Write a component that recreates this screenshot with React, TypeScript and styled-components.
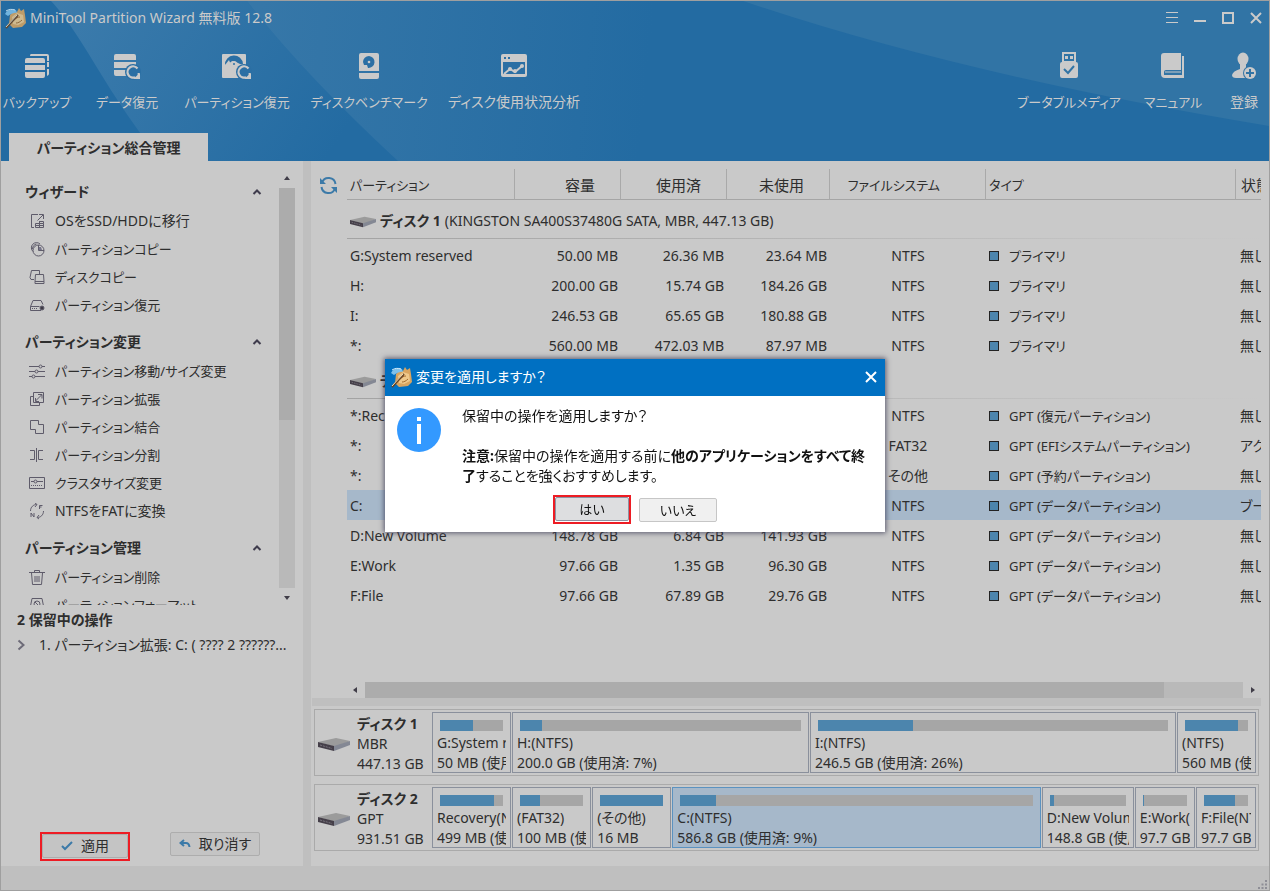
import React from "react";
import styled, { createGlobalStyle, css } from "styled-components";

const GlobalStyle = createGlobalStyle`
  *, *::before, *::after { box-sizing: border-box; }
  body {
    margin: 0;
    background: #c9c9c9;
    color: #2e2e2e;
    font-family: "Noto Sans", "Noto Sans CJK JP", sans-serif;
    font-size: 14px;
    line-height: 20px;
    font-feature-settings: "palt";
  }
  button {
    font: inherit;
    font-feature-settings: inherit;
    color: inherit;
    margin: 0;
    padding: 0;
    border: 0;
    background: none;
  }
  svg { display: block; flex: none; }
`;

/* ---------- Window frame ---------- */

const Window = styled.div`
  display: flex;
  flex-direction: column;
  height: 100vh;
  border: 1px solid #9f9f9f;
  overflow: hidden;
`;

const Header = styled.header`
  position: relative;
  flex: none;
  display: flex;
  flex-direction: column;
  height: 160px;
  background: #236ba2;
  color: #cacaca;
`;

const HeaderArt = styled.svg`
  position: absolute;
  inset: 0;
  width: 100%;
  height: 100%;
`;

const TitleBar = styled.div`
  position: relative;
  display: flex;
  align-items: center;
  gap: 4px;
  height: 33px;
  padding: 0 7px 0 3px;
`;

const AppTitle = styled.h1`
  flex: 1;
  margin: 0;
  font-size: 14px;
  font-weight: 400;
`;

const WindowButtons = styled.div`
  display: flex;
  gap: 16px;
`;

const Toolbar = styled.nav`
  position: relative;
  display: flex;
  justify-content: space-between;
  padding: 16px 9px 0 3px;
`;

const ToolGroup = styled.div<{ $gap: number }>`
  display: flex;
  gap: ${(p) => p.$gap}px;
`;

const ToolButton = styled.button<{ $width: number; $size: number }>`
  display: flex;
  flex-direction: column;
  align-items: center;
  gap: 12px;
  width: ${(p) => p.$width}px;
  font-size: ${(p) => p.$size}px;
  line-height: 20px;
  white-space: nowrap;
`;

const TabRow = styled.div`
  position: relative;
  display: flex;
  margin-top: auto;
  padding-left: 8px;
`;

const Tab = styled.button`
  width: 199px;
  height: 28px;
  padding-top: 2px;
  background: #c9c9c9;
  color: #2e2e2e;
  font-weight: 700;
`;

const Body = styled.div`
  flex: 1;
  display: flex;
  min-height: 0;
`;

const StatusBar = styled.footer`
  flex: none;
  display: flex;
  justify-content: flex-end;
  align-items: flex-end;
  height: 24px;
  padding: 0 2px 1px 0;
  background: #bfbfbf;
`;

/* ---------- Sidebar ---------- */

const Sidebar = styled.aside`
  flex: none;
  display: flex;
  flex-direction: column;
  width: 302px;
`;

const Divider = styled.div`
  flex: none;
  width: 8px;
  background: #bfbfbf;
`;

const ActionPane = styled.div`
  flex: 444 1 444px;
  display: flex;
  min-height: 0;
  padding-right: 8px;
  overflow: hidden;
`;

const ActionList = styled.div`
  flex: 1;
  padding: 8px 17px 0 24px;
`;

const GroupHead = styled.button`
  display: flex;
  align-items: center;
  justify-content: space-between;
  width: 100%;
  height: 28px;
  margin-top: 10px;
  padding-bottom: 2px;
  font-size: 14px;
  font-weight: 700;
`;

const ActionItem = styled.button<{ $size: number }>`
  display: flex;
  align-items: center;
  gap: 9px;
  width: 100%;
  height: 28px;
  padding-left: 4px;
  font-size: ${(p) => p.$size}px;
  white-space: nowrap;
`;

const VScroll = styled.div`
  display: flex;
  flex-direction: column;
  align-items: center;
  width: 16px;
  padding: 13px 0 3px;
`;

const VTrack = styled.div`
  flex: 1;
  width: 16px;
  margin: 6px 0 6px;
  background: #b9b9b9;
`;

const VThumb = styled.div`
  height: 58%;
  background: #acacac;
`;

const Pending = styled.section`
  flex: 261 1 261px;
  display: flex;
  flex-direction: column;
  min-height: 0;
  padding: 5px 16px 5px 16px;
`;

const PendingTitle = styled.h2`
  margin: 0 0 5px;
  font-size: 14px;
  font-weight: 700;
  line-height: 20px;
`;

const PendingRow = styled.button`
  display: flex;
  align-items: center;
  gap: 13px;
  white-space: nowrap;
`;

const PendingButtons = styled.div`
  display: flex;
  align-items: flex-start;
  gap: 40px;
  margin-top: auto;
  padding-left: 23px;
`;

const Marked = styled.span`
  display: inline-flex;
  padding-bottom: 1px;
  border: 2px solid #ed1c24;
`;

const PushButton = styled.button<{ $width: number; $tone?: "light" | "focus" }>`
  display: flex;
  align-items: center;
  justify-content: center;
  gap: 8px;
  width: ${(p) => p.$width}px;
  height: 24px;
  border: 1px solid #adadad;
  border-radius: 2px;
  background: #c4c4c4;
  ${(p) => p.$tone === "light" && css`background: #f0f0f0; border-color: #c6c6c6; color: #111; font-size: 13px;`}
  ${(p) => p.$tone === "focus" && css`background: #dddee0; border-color: #8d93a3; color: #111; font-size: 13px;`}
`;

/* ---------- Partition table ---------- */

const Main = styled.main`
  flex: 1;
  display: flex;
  flex-direction: column;
  min-width: 0;
`;

const TablePane = styled.section`
  flex: 1;
  display: flex;
  min-height: 0;
  padding: 8px 8px 0 8px;
  gap: 9px;
`;

const RefreshButton = styled.button`
  align-self: flex-start;
  padding-top: 7px;
`;

const TableColumn = styled.div`
  flex: 1;
  display: flex;
  flex-direction: column;
  min-width: 0;
`;

const TableClip = styled.div`
  flex: 1;
  overflow: hidden;
`;

const Table = styled.table`
  width: 100%;
  table-layout: fixed;
  border-collapse: separate;
  border-spacing: 0;
  white-space: nowrap;
`;

type Align = "left" | "right" | "center";

const HeadCell = styled.th<{ $align?: Align; $pad?: number; $size?: number }>`
  height: 31px;
  padding: 2px ${(p) => p.$pad ?? 4}px 0 3px;
  border-right: 1px solid #a9a9a9;
  border-bottom: 1px solid #a5a5a5;
  text-align: ${(p) => p.$align ?? "left"};
  font-size: ${(p) => p.$size ?? 13}px;
  font-weight: 400;
  overflow: hidden;
  &:last-child { padding: 2px 0 0 5px; border-right: 0; }
`;

const DiskCell = styled.td`
  height: 40px;
  padding: 2px 0 0 3px;
  background: linear-gradient(90deg, #a3a3a3, #c9c9c9) 0 38px / 100% 1px no-repeat;
`;

const DiskLabel = styled.div`
  display: flex;
  align-items: center;
  gap: 4px;
`;

const Row = styled.tr<{ $selected?: boolean }>`
  background: ${(p) => (p.$selected ? "#a6b8ca" : "transparent")};
`;

const Cell = styled.td<{ $align?: Align }>`
  height: 30px;
  padding: 1px 3px 0;
  text-align: ${(p) => p.$align ?? "left"};
  overflow: hidden;
  &:last-child { padding: 1px 0 0 4px; }
`;

const TypeLabel = styled.span<{ $size: number }>`
  display: flex;
  align-items: center;
  gap: 10px;
  font-size: ${(p) => p.$size}px;
`;

const Swatch = styled.i`
  width: 10px;
  height: 10px;
  border: 1px solid #222;
  background: #4c85ad;
`;

const HScroll = styled.div`
  display: flex;
  align-items: center;
  gap: 6px;
  height: 16px;
  padding: 0 4px;
`;

const HTrack = styled.div`
  flex: 1;
  height: 16px;
  background: #b9b9b9;
`;

const HThumb = styled.div`
  width: 91%;
  height: 16px;
  background: #acacac;
`;

const Splitter = styled.div`
  flex: none;
  height: 8px;
  margin: 0 8px 0 1px;
  background: #bfbfbf;
`;

/* ---------- Disk map ---------- */

const DiskMap = styled.section`
  flex: none;
  display: flex;
  flex-direction: column;
  gap: 8px;
  padding: 3px 10px 15px 3px;
`;

const DiskRow = styled.div`
  display: flex;
  height: 67px;
  padding: 2px;
  border: 1px solid #aaaaaa;
`;

const DiskInfo = styled.div`
  flex: none;
  display: flex;
  align-items: center;
  gap: 7px;
  width: 115px;
  padding: 2px 0 0 1px;
`;

const DiskText = styled.div`
  display: flex;
  flex-direction: column;
`;

const Parts = styled.div`
  flex: 1;
  display: flex;
  gap: 1px;
  min-width: 0;
`;

const Part = styled.button<{ $share: number; $selected?: boolean }>`
  flex: ${(p) => `${p.$share} 1 ${p.$share}px`};
  display: flex;
  flex-direction: column;
  min-width: 0;
  padding: 7px 4px 0;
  border: 1px solid ${(p) => (p.$selected ? "#5b92c0" : "#8a909c")};
  background: ${(p) => (p.$selected ? "#a6b8ca" : "transparent")};
  text-align: left;
`;

const UsageBar = styled.span`
  display: block;
  align-self: stretch;
  height: 11px;
  margin: 0 3px 2px;
  background: #a6a6a6;
`;

const UsageFill = styled.span`
  display: block;
  height: 11px;
  background: #4c85ad;
`;

const PartLine = styled.span`
  overflow: hidden;
  white-space: nowrap;
`;

/* ---------- Dialog ---------- */

const Overlay = styled.div`
  position: fixed;
  inset: 0;
  display: flex;
  align-items: center;
  justify-content: center;
`;

const Dialog = styled.div`
  width: 500px;
  background: #fff;
  color: #111;
  box-shadow: 0 0 5px 1px rgba(60, 60, 85, 0.8);
`;

const DialogTitle = styled.div`
  display: flex;
  align-items: center;
  gap: 4px;
  height: 37px;
  padding: 0 8px 2px 5px;
  background: #0070c2;
  color: #fff;
`;

const DialogHeading = styled.h2`
  flex: 1;
  margin: 0;
  font-size: 14px;
  font-weight: 400;
`;

const DialogBody = styled.div`
  display: flex;
  gap: 21px;
  padding: 12px 0 0 12px;
`;

const Message = styled.p`
  margin: -2px 0 0;
  white-space: nowrap;
`;

const DialogButtons = styled.div`
  display: flex;
  align-items: center;
  justify-content: center;
  gap: 8px;
  padding: 9px 0 8px;
`;

/* ---------- Icons ---------- */

const Logo = ({ dim = false }: { dim?: boolean }) => (
  <svg width="22" height="22" viewBox="0 0 22 22" opacity={dim ? 0.85 : 1}>
    <path d="M6 8 10 4 13 5 15 1 17 4 20 2 21 8 22 16 18 20 9 21 5 17z" fill="#d9a560" />
    <path d="M8 10 13 6 19 8 20 15 14 18 9 17z" fill="#eec88b" />
    <path d="M10 13c2-2 4-3 6-3M12 16c2 0 4-1 6-3" stroke="#a26a2c" fill="none" />
    <path d="M1 7C3 3 7 1 12 3l1 3C9 5 6 8 4 9z" fill="#7fc1ea" />
    <path d="M2 4c3-2 6-2 9-1" stroke="#d5ecfa" fill="none" />
    <path d="M2 21 14 8" stroke="#6b4524" strokeWidth="2" />
    <path d="M2 20 13 8" stroke="#f0dfbd" />
  </svg>
);

const IconBackup = () => (
  <svg width="26" height="30" viewBox="0 0 26 30" fill="#cacaca">
    <path d="M7 4h16q2 0 2 2v5h-2V6H6q0-2 1-2zM23 12h2v5h-2zM23 19h2v5q0 1-2 2z" />
    <path d="M3 8h16q2 0 2 2v3H1v-3q0-2 2-2zM1 15h20v5H1zM1 22h20v4q0 2-2 2H3q-2 0-2-2z" />
  </svg>
);

const Restore = ({ x, y }: { x: number; y: number }) => (
  <g transform={`translate(${x} ${y})`}>
    <circle cx="0" cy="0" r="8" fill="#2b6fa4" />
    <path d="M4.5-3.5A5.6 5.6 0 1 0 2 5.3" fill="none" stroke="#cacaca" strokeWidth="2.2" />
    <path d="M0 7h7V1z" fill="#cacaca" />
    <path d="M5.6 1v5" stroke="#cacaca" strokeWidth="2" />
  </g>
);

const IconData = () => (
  <svg width="28" height="30" viewBox="0 0 28 30">
    <path d="M3 4h18q2 0 2 2v4H1V6q0-2 2-2zM1 12h22v6H1zM1 20h14v6H3q-2 0-2-2z" fill="#cacaca" />
    <Restore x={20} y={22} />
  </svg>
);

const IconPartition = () => (
  <svg width="30" height="30" viewBox="2 0 30 30">
    <rect x="2" y="4" width="24" height="24" rx="1" fill="#cacaca" />
    <path d="M5 15a9 9 0 0 1 18-1l-3 0-2-1-2-1-4-1-1 1z" fill="#2b6fa4" />
    <circle cx="14" cy="14" r="3" fill="#cacaca" />
    <circle cx="14" cy="14" r="1" fill="#2b6fa4" />
    <path d="m9 10-4 5h6z" fill="#cacaca" />
    <Restore x={24} y={22} />
  </svg>
);

const IconBenchmark = () => (
  <svg width="24" height="30" viewBox="0 0 24 30">
    <path d="M4 3h16q2 0 2 2v16H2V5q0-2 2-2zM2 23h20v4q0 2-2 2H4q-2 0-2-2z" fill="#cacaca" />
    <path d="M12 6a6 6 0 1 1-1 12l-1-3-3 0-1-3a6 6 0 0 1 6-6z" fill="#2b6fa4" />
    <circle cx="12" cy="12" r="1.3" fill="#cacaca" />
  </svg>
);

const IconAnalysis = () => (
  <svg width="30" height="30" viewBox="0 0 30 30">
    <path d="M4 4h22q2 0 2 2v19q0 2-2 2H4q-2 0-2-2V6q0-2 2-2z" fill="#cacaca" />
    <path d="M5 7h2v2H5zM9 7h2v2H9zM4 12h22v12H4z" fill="#2b6fa4" />
    <path d="m5 24 6-5 5 3 7-6" fill="none" stroke="#cacaca" strokeWidth="2" />
    <circle cx="11" cy="19" r="2" fill="#cacaca" />
    <circle cx="16" cy="21" r="2" fill="#cacaca" />
    <circle cx="23" cy="16" r="2" fill="#cacaca" />
  </svg>
);

const IconUsb = () => (
  <svg width="20" height="30" viewBox="0 0 20 30">
    <path d="M3 2h14v10q2 0 2 2v12q0 2-2 2H3q-2 0-2-2V14q0-2 2-2z" fill="#cacaca" />
    <path d="M5 4h10v7H5z" fill="#3174a5" />
    <path d="M6 6h3v3H6zM11 6h3v3h-3z" fill="#cacaca" />
    <path d="m5 19 4 4 6-7" fill="none" stroke="#3174a5" strokeWidth="2" />
  </svg>
);

const IconBook = () => (
  <svg width="26" height="30" viewBox="0 0 26 30">
    <path d="M4 3h17v17H6q-2 0-2 2v3h18V6h2v22H5q-4 0-4-4V6q0-3 3-3z" fill="#cacaca" />
    <path d="M5 22h16" stroke="#cacaca" />
  </svg>
);

const IconUser = () => (
  <svg width="26" height="30" viewBox="0 0 26 30">
    <ellipse cx="12" cy="9" rx="5.5" ry="6.5" fill="#cacaca" />
    <path d="M9 13h6v6l3 9H5q-4 0-4-3 1-4 8-6z" fill="#cacaca" />
    <circle cx="19" cy="23" r="7" fill="#3174a5" />
    <circle cx="19" cy="23" r="6" fill="#cacaca" />
    <path d="M19 19v8M15 23h8" stroke="#3174a5" strokeWidth="2" />
  </svg>
);

const IconMenu = () => (
  <svg width="12" height="12" viewBox="0 0 12 12"><path d="M0 .5h12M0 5.5h12M0 10.5h12" stroke="#cacaca" /></svg>
);
const IconMin = () => (
  <svg width="12" height="12" viewBox="0 0 12 12"><path d="M0 9h12" stroke="#cacaca" strokeWidth="2" /></svg>
);
const IconMax = () => (
  <svg width="12" height="12" viewBox="0 0 12 12"><path d="M1 1h10v10H1z" fill="none" stroke="#cacaca" strokeWidth="2" /></svg>
);
const IconClose = ({ color = "#cacaca" }: { color?: string }) => (
  <svg width="12" height="12" viewBox="0 0 12 12"><path d="m1 1 10 10M11 1 1 11" stroke={color} strokeWidth="2" /></svg>
);

const Chevron = () => (
  <svg width="10" height="8" viewBox="0 0 10 8"><path d="m1.500 6 3.500-3.500L8.500 6" fill="none" stroke="#3f3c4d" strokeWidth="2" /></svg>
);

const Triangle = ({ turn }: { turn: number }) => (
  <svg width="8" height="8" viewBox="0 0 8 8"><path d="M1 6 4 2l3 4z" fill="#403d48" transform={`rotate(${turn} 4 4)`} /></svg>
);

const sideIcons: Record<string, React.ReactNode> = {
  migrate: <><path d="M9 1.500H2.500v13H5" /><path d="M8.500 7.500 14 2M10 1.500h4.500V6" /><path d="M6.500 10.500h8v4h-8zM10.500 8.500v6M6.500 12.500h8M10 8.500h4.500v2" /></>,
  copyPart: <><path d="M4 10.500A5 5 0 1 1 11 3M3.500 8c0-3 2-4.500 4-5" /><circle cx="9.500" cy="9.500" r="5.500" /><path d="M9.500 4v5.500H15" /><path d="M10 6h2l1 3h-3z" fill="#77758a" stroke="none" /></>,
  copyDisk: <><path d="M5 10.500H2l-1-2 1.500-7h8V5" /><path d="M6.500 5.500h8l.5 7H6zM6 12.500v2h9v-2" /></>,
  recover: <><path d="M1.500 9.500 4 3.500h8l2 4M1.500 9.500h9M1.500 9.500v4H12" /><path d="M3 11.500h6" strokeDasharray="1 1" /><circle cx="13" cy="11" r="2" fill="#3d3a45" /></>,
  resize: <><path d="M0 3.500h16M0 8.500h16M0 13.500h16" /><circle cx="11.500" cy="3.500" r="1.500" fill="#c9c9c9" /><circle cx="7.500" cy="8.500" r="1.500" fill="#c9c9c9" /><circle cx="4.500" cy="13.500" r="1.500" fill="#c9c9c9" /></>,
  extend: <><path d="M4.500 1.500h10v10h-10zM4 5.500H1.500v9h9V12" /><path d="m6.500 10 6-6M9 3.500h4v4M6.500 7v3.500H10" /></>,
  merge: <path d="M1.500 1.500h8v4h5v9h-8v-4h-5z" />,
  split: <path d="M7.500 1v14M1 3.500h4.500v9H1M14 3.500H9.500v9H14" />,
  cluster: <><path d="M.5 2.500h15v11H.5zM2 6.500h12" /><path d="M2 10.500h12" strokeDasharray="1 1" /><circle cx="6.500" cy="6.500" r="1.500" fill="#c9c9c9" /></>,
  convert: <><path d="M1.500 8c0-4 3-6.500 6-6.500M6 0l2 1.500L6 4M14.500 8c0 4-3 6.500-6 6.500M10 12l-2 2.500 2 1.500" /><path d="M10.500 6V2.500h3M10.500 4h2M2 14v-4l3 4v-4" /></>,
  trash: <><path d="M0 3.500h16M5.500 3V1.500h5V3M2.500 4l1 11.500h9l1-11.500M6 7v6M8 7v6M10 7v6" /></>,
  format: <><path d="M3 1.500h10l2 10v4H1v-4z" /><circle cx="8" cy="7" r="3" /><path d="m6 5 4 4" /></>,
};

const SideIcon = ({ name }: { name: string }) => (
  <svg width="17" height="17" viewBox="0 0 17 17" fill="none" stroke="#5e5b6a">{sideIcons[name]}</svg>
);

const DiskIcon = ({ width }: { width: number }) => (
  <svg width={width} height={width / 2} viewBox="0 0 32 16">
    <path d="M0 6 18 2l14 3-14 6z" fill="#9b9b9b" />
    <path d="m0 6 16 4v5L0 11z" fill="#453f49" />
    <path d="m16 10 16-5v4l-16 6z" fill="#848894" />
    <path d="m2 9 12 3.500" stroke="#77737c" strokeDasharray="2 1" />
  </svg>
);

const IconRefresh = () => (
  <svg width="19" height="19" viewBox="0 0 19 19" fill="none" stroke="#3c7aa8" strokeWidth="2">
    <path d="M3 6.500A7 7 0 0 1 16.500 8M16 12.500A7 7 0 0 1 2.500 11" />
    <path d="M1 2v6h6zM18 17v-6h-6z" fill="#3c7aa8" stroke="none" />
  </svg>
);

/* ---------- Data ---------- */

const leftTools = [
  { label: "バックアップ", width: 66, size: 13, icon: <IconBackup /> },
  { label: "データ復元", width: 64, size: 13, icon: <IconData /> },
  { label: "パーティション復元", width: 106, size: 13, icon: <IconPartition /> },
  { label: "ディスクベンチマーク", width: 108, size: 13, icon: <IconBenchmark /> },
  { label: "ディスク使用状況分析", width: 132, size: 14, icon: <IconAnalysis /> },
];

const rightTools = [
  { label: "ブータブルメディア", width: 98, size: 13, icon: <IconUsb /> },
  { label: "マニュアル", width: 56, size: 13, icon: <IconBook /> },
  { label: "登録", width: 32, size: 14, icon: <IconUser /> },
];

const actionGroups = [
  {
    title: "ウィザード",
    items: [
      ["migrate", "OSをSSD/HDDに移行", 14],
      ["copyPart", "パーティションコピー", 13],
      ["copyDisk", "ディスクコピー", 13],
      ["recover", "パーティション復元", 13],
    ],
  },
  {
    title: "パーティション変更",
    items: [
      ["resize", "パーティション移動/サイズ変更", 13],
      ["extend", "パーティション拡張", 13],
      ["merge", "パーティション結合", 13],
      ["split", "パーティション分割", 13],
      ["cluster", "クラスタサイズ変更", 13],
      ["convert", "NTFSをFATに変換", 14],
    ],
  },
  {
    title: "パーティション管理",
    items: [
      ["trash", "パーティション削除", 13],
      ["format", "パーティションフォーマット", 13],
    ],
  },
] as { title: string; items: [string, string, number][] }[];

type Partition = [string, string, string, string, string, string, string];

const disks: { name: string; detail: string; rows: Partition[] }[] = [
  {
    name: "ディスク 1",
    detail: "(KINGSTON SA400S37480G SATA, MBR, 447.13 GB)",
    rows: [
      ["G:System reserved", "50.00 MB", "26.36 MB", "23.64 MB", "NTFS", "プライマリ", "無し"],
      ["H:", "200.00 GB", "15.74 GB", "184.26 GB", "NTFS", "プライマリ", "無し"],
      ["I:", "246.53 GB", "65.65 GB", "180.88 GB", "NTFS", "プライマリ", "無し"],
      ["*:", "560.00 MB", "472.03 MB", "87.97 MB", "NTFS", "プライマリ", "無し"],
    ],
  },
  {
    name: "ディスク 2",
    detail: "",
    rows: [
      ["*:Recovery", "", "", "", "NTFS", "GPT (復元パーティション)", "無し"],
      ["*:", "", "", "", "FAT32", "GPT (EFIシステムパーティション)", "アクティブ"],
      ["*:", "", "", "", "その他", "GPT (予約パーティション)", "無し"],
      ["C:", "", "", "", "NTFS", "GPT (データパーティション)", "ブート"],
      ["D:New Volume", "148.78 GB", "6.84 GB", "141.93 GB", "NTFS", "GPT (データパーティション)", "無し"],
      ["E:Work", "97.66 GB", "1.35 GB", "96.30 GB", "NTFS", "GPT (データパーティション)", "無し"],
      ["F:File", "97.66 GB", "67.89 GB", "29.76 GB", "NTFS", "GPT (データパーティション)", "無し"],
    ],
  },
];

const diskMap = [
  {
    name: "ディスク 1", scheme: "MBR", size: "447.13 GB",
    parts: [
      { share: 79, used: 52, name: "G:System reserved", info: "50 MB (使用済: 52%)" },
      { share: 297, used: 8, name: "H:(NTFS)", info: "200.0 GB (使用済: 7%)" },
      { share: 366, used: 27, name: "I:(NTFS)", info: "246.5 GB (使用済: 26%)" },
      { share: 79, used: 84, name: "(NTFS)", info: "560 MB (使用済: 84%)" },
    ],
  },
  {
    name: "ディスク 2", scheme: "GPT", size: "931.51 GB",
    parts: [
      { share: 79, used: 86, name: "Recovery(NTFS)", info: "499 MB (使用済: 84%)" },
      { share: 79, used: 32, name: "(FAT32)", info: "100 MB (使用済: 30%)" },
      { share: 79, used: 100, name: "(その他)", info: "16 MB" },
      { share: 368, used: 10, name: "C:(NTFS)", info: "586.8 GB (使用済: 9%)" },
      { share: 92, used: 5, name: "D:New Volume(NTFS)", info: "148.8 GB (使用済: 4%)" },
      { share: 60, used: 2, name: "E:Work(NTFS)", info: "97.7 GB" },
      { share: 60, used: 70, name: "F:File(NTFS)", info: "97.7 GB" },
    ],
  },
];

export default function App() {
  return (
    <>
      <GlobalStyle />
      <Window>
        <Header>
          <HeaderArt viewBox="0 0 1268 160" preserveAspectRatio="none" aria-hidden="true">
            <defs>
              <linearGradient id="beamA" x1="0" y1="0" x2="1" y2="0.3">
                <stop offset="0" stopColor="#3d7cac" />
                <stop offset="1" stopColor="#236ba2" />
              </linearGradient>
              <linearGradient id="beamB" gradientUnits="userSpaceOnUse" x1="260" y1="0" x2="650" y2="40">
                <stop offset="0" stopColor="#3677a8" />
                <stop offset="1" stopColor="#236ba2" />
              </linearGradient>
            </defs>
            <path d="M50 0H246Q300 70 397 160H160Q125 115 95 65T50 0z" fill="url(#beamA)" />
            <path d="M246 0H700V160H397Q300 70 246 0z" fill="url(#beamB)" />
            <path d="M742 0Q960 74 1268 125V0z" fill="#3174a5" />
          </HeaderArt>
          <TitleBar>
            <Logo dim />
            <AppTitle>MiniTool Partition Wizard 無料版 12.8</AppTitle>
            <WindowButtons>
              <button aria-label="メニュー"><IconMenu /></button>
              <button aria-label="最小化"><IconMin /></button>
              <button aria-label="最大化"><IconMax /></button>
              <button aria-label="閉じる"><IconClose /></button>
            </WindowButtons>
          </TitleBar>
          <Toolbar>
            <ToolGroup $gap={25}>
              {leftTools.map((t) => (
                <ToolButton key={t.label} $width={t.width} $size={t.size}>{t.icon}{t.label}</ToolButton>
              ))}
            </ToolGroup>
            <ToolGroup $gap={27}>
              {rightTools.map((t) => (
                <ToolButton key={t.label} $width={t.width} $size={t.size}>{t.icon}{t.label}</ToolButton>
              ))}
            </ToolGroup>
          </Toolbar>
          <TabRow>
            <Tab>パーティション総合管理</Tab>
          </TabRow>
        </Header>

        <Body>
          <Sidebar>
            <ActionPane>
              <ActionList>
                {actionGroups.map((g) => (
                  <div key={g.title}>
                    <GroupHead>{g.title}<Chevron /></GroupHead>
                    {g.items.map(([icon, label, size]) => (
                      <ActionItem key={label} $size={size}><SideIcon name={icon} />{label}</ActionItem>
                    ))}
                  </div>
                ))}
              </ActionList>
              <VScroll>
                <Triangle turn={0} />
                <VTrack><VThumb /></VTrack>
                <Triangle turn={180} />
              </VScroll>
            </ActionPane>
            <Pending>
              <PendingTitle>2 保留中の操作</PendingTitle>
              <PendingRow>
                <svg width="9" height="12" viewBox="0 0 9 12"><path d="m1.500 1.500 5 4.500-5 4.500" fill="none" stroke="#6d6b78" strokeWidth="2" /></svg>
                1. パーティション拡張: C: ( ???? 2 ??????...
              </PendingRow>
              <PendingButtons>
                <Marked>
                  <PushButton $width={86}>
                    <svg width="12" height="10" viewBox="0 0 12 10"><path d="m1 5 3 3 7-7" fill="none" stroke="#3c7aa8" strokeWidth="2" /></svg>
                    適用
                  </PushButton>
                </Marked>
                <PushButton $width={90}>
                  <svg width="12" height="10" viewBox="0 0 12 10"><path d="M5 1 1.500 4 5 7M2 4h5q3 0 3.500 4" fill="none" stroke="#3c7aa8" strokeWidth="2" /></svg>
                  取り消す
                </PushButton>
              </PendingButtons>
            </Pending>
          </Sidebar>
          <Divider />

          <Main>
            <TablePane>
              <RefreshButton aria-label="更新"><IconRefresh /></RefreshButton>
              <TableColumn>
                <TableClip>
                  <Table>
                    <colgroup>
                      <col width="168" />
                      <col width="106" />
                      <col width="106" />
                      <col width="103" />
                      <col width="156" />
                      <col />
                      <col width="25" />
                    </colgroup>
                    <thead>
                      <tr>
                        <HeadCell>パーティション</HeadCell>
                        <HeadCell $align="right" $pad={25} $size={15}>容量</HeadCell>
                        <HeadCell $align="right" $pad={25} $size={15}>使用済</HeadCell>
                        <HeadCell $align="right" $pad={25} $size={15}>未使用</HeadCell>
                        <HeadCell $align="right" $pad={45}>ファイルシステム</HeadCell>
                        <HeadCell>タイプ</HeadCell>
                        <HeadCell $size={15}>状態</HeadCell>
                      </tr>
                    </thead>
                    <tbody>
                      {disks.map((d) => (
                        <React.Fragment key={d.name}>
                          <tr>
                            <DiskCell colSpan={7}>
                              <DiskLabel>
                                <DiskIcon width={26} />
                                <strong>{d.name}</strong>
                                <span>{d.detail}</span>
                              </DiskLabel>
                            </DiskCell>
                          </tr>
                          {d.rows.map((r, i) => (
                            <Row key={i} $selected={r[0] === "C:"}>
                              <Cell>{r[0]}</Cell>
                              <Cell $align="right">{r[1]}</Cell>
                              <Cell $align="right">{r[2]}</Cell>
                              <Cell $align="right">{r[3]}</Cell>
                              <Cell $align="center">{r[4]}</Cell>
                              <Cell>
                                <TypeLabel $size={13}><Swatch />{r[5]}</TypeLabel>
                              </Cell>
                              <Cell>{r[6]}</Cell>
                            </Row>
                          ))}
                        </React.Fragment>
                      ))}
                    </tbody>
                  </Table>
                </TableClip>
                <HScroll>
                  <Triangle turn={270} />
                  <HTrack><HThumb /></HTrack>
                  <Triangle turn={90} />
                </HScroll>
              </TableColumn>
            </TablePane>
            <Splitter />
            <DiskMap>
              {diskMap.map((d) => (
                <DiskRow key={d.name}>
                  <DiskInfo>
                    <DiskIcon width={32} />
                    <DiskText>
                      <strong>{d.name}</strong>
                      <span>{d.scheme}</span>
                      <span>{d.size}</span>
                    </DiskText>
                  </DiskInfo>
                  <Parts>
                    {d.parts.map((p) => (
                      <Part key={p.name} $share={p.share} $selected={p.name === "C:(NTFS)"}>
                        <UsageBar><UsageFill style={{ width: `${p.used}%` }} /></UsageBar>
                        <PartLine>{p.name}</PartLine>
                        <PartLine>{p.info}</PartLine>
                      </Part>
                    ))}
                  </Parts>
                </DiskRow>
              ))}
            </DiskMap>
          </Main>
        </Body>

        <StatusBar>
          <svg width="9" height="9" viewBox="0 0 9 9" fill="#8e8e96">
            <path d="M7 0h2v2H7zM3.500 3.500h2v2h-2zM7 3.500h2v2H7zM0 7h2v2H0zM3.500 7h2v2h-2zM7 7h2v2H7z" />
          </svg>
        </StatusBar>
      </Window>

      <Overlay>
        <Dialog role="dialog" aria-labelledby="apply-title">
          <DialogTitle>
            <Logo />
            <DialogHeading id="apply-title">変更を適用しますか？</DialogHeading>
            <button aria-label="閉じる"><IconClose color="#fff" /></button>
          </DialogTitle>
          <DialogBody>
            <svg width="44" height="44" viewBox="0 0 44 44">
              <circle cx="22" cy="22" r="22" fill="#3399ff" />
              <path d="M20 9h4v4h-4zM20 16h4v20h-4z" fill="#fff" />
            </svg>
            <Message>
              保留中の操作を適用しますか？
              <br />
              <br />
              <strong>注意:</strong>保留中の操作を適用する前に<strong>他のアプリケーションをすべて終</strong>
              <br />
              <strong>了</strong>することを強くおすすめします。
            </Message>
          </DialogBody>
          <DialogButtons>
            <Marked>
              <PushButton $width={74} $tone="focus">はい</PushButton>
            </Marked>
            <PushButton $width={78} $tone="light">いいえ</PushButton>
          </DialogButtons>
        </Dialog>
      </Overlay>
    </>
  );
}
